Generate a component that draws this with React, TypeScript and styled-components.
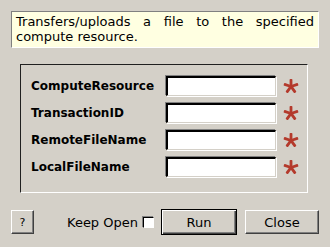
import styled, { createGlobalStyle } from 'styled-components';

const FIELDS = ['ComputeResource', 'TransactionID', 'RemoteFileName', 'LocalFileName'];

const GlobalStyle = createGlobalStyle`
  html, body {
    margin: 0;
    padding: 0;
    background: #d4d0c8;
  }
`;

const Window = styled.div`
  width: 330px;
  height: 247px;
  box-sizing: border-box;
  padding: 11px 11px 0 11px;
  background: #d4d0c8;
  font-family: "DejaVu Sans", sans-serif;
  font-size: 13px;
  color: #000;
  display: flex;
  flex-direction: column;
`;

const Description = styled.div`
  height: 37px;
  box-sizing: border-box;
  padding: 2px 4px 0 4px;
  background: #ffffe1;
  border-top: 1px solid #808080;
  border-left: 1px solid #808080;
  border-right: 1px solid #ffffff;
  border-bottom: 1px solid #ffffff;
  line-height: 15px;
  text-align: justify;
  text-align-last: left;
`;

const Panel = styled.div`
  margin: 16px 0 0 9px;
  width: 288px;
  height: 129px;
  box-sizing: border-box;
  border-top: 1px solid #202020;
  border-left: 1px solid #202020;
  border-right: 1px solid #ffffff;
  border-bottom: 1px solid #ffffff;
  padding: 11px 0 0 10px;
  display: flex;
  flex-direction: column;
  gap: 7px;
`;

const Row = styled.div`
  display: flex;
  align-items: center;
  height: 20px;
`;

const Label = styled.div`
  width: 135px;
  font-size: 12px;
  font-weight: bold;
`;

const Input = styled.div`
  width: 110px;
  height: 20px;
  box-sizing: border-box;
  background: #fff;
  border-top: 2px solid #000;
  border-left: 2px solid #000;
  border-right: 1px solid #d4d0c8;
  border-bottom: 1px solid #d4d0c8;
  box-shadow: -1px -1px 0 #808080, 1px 1px 0 #fff;
`;

const Star = styled.svg`
  margin-left: 7px;
  width: 16px;
  height: 16px;
`;

const Footer = styled.div`
  margin-top: 16px;
  display: flex;
  align-items: center;
  height: 26px;
`;

const Button = styled.button<{ $default?: boolean; $w: number; $gap?: number }>`
  width: ${p => p.$w}px;
  height: ${p => (p.$default ? 26 : 24)}px;
  margin-left: ${p => p.$gap ?? 0}px;
  box-sizing: border-box;
  padding: 0;
  background: #d4d0c8;
  font-family: "DejaVu Sans", sans-serif;
  font-size: 13px;
  color: #000;
  border-top: 1px solid #ffffff;
  border-left: 1px solid #ffffff;
  border-right: 1px solid #404040;
  border-bottom: 1px solid #404040;
  box-shadow: inset -1px -1px 0 #808080;
  ${p => p.$default && `
    border: 1px solid #000;
    box-shadow: inset 1px 1px 0 #fff, inset -1px -1px 0 #404040, inset -2px -2px 0 #808080;
  `}
`;

const HelpButton = styled(Button)`
  font-size: 11px;
`;

const KeepOpen = styled.label`
  display: flex;
  align-items: center;
  margin-left: 33px;
  margin-right: 7px;
  gap: 5px;
`;

const Check = styled.span`
  width: 11px;
  height: 11px;
  box-sizing: border-box;
  background: #fff;
  border-top: 1px solid #000;
  border-left: 1px solid #000;
  border-right: 1px solid #fff;
  border-bottom: 1px solid #fff;
  box-shadow: -1px -1px 0 #808080;
`;

const Asterisk = () => (
  <Star viewBox="0 0 16 16">
    {[0, 72, 144, 216, 288].map(a => (
      <rect key={a} x="6.6" y="1" width="2.8" height="7.5" rx="0.8" fill="#b43a2c" transform={`rotate(${a} 8 8.5)`} />
    ))}
  </Star>
);

function App() {
  return (
    <Window>
      <GlobalStyle />
      <Description>
        Transfers/uploads a file to the specified compute resource.
      </Description>
      <Panel>
        {FIELDS.map(name => (
          <Row key={name}>
            <Label>{name}</Label>
            <Input />
            <Asterisk />
          </Row>
        ))}
      </Panel>
      <Footer>
        <HelpButton $w={23}>?</HelpButton>
        <KeepOpen>
          Keep Open <Check />
        </KeepOpen>
        <Button $w={76} $default>Run</Button>
        <Button $w={74} $gap={8}>Close</Button>
      </Footer>
    </Window>
  );
}

export default App;
